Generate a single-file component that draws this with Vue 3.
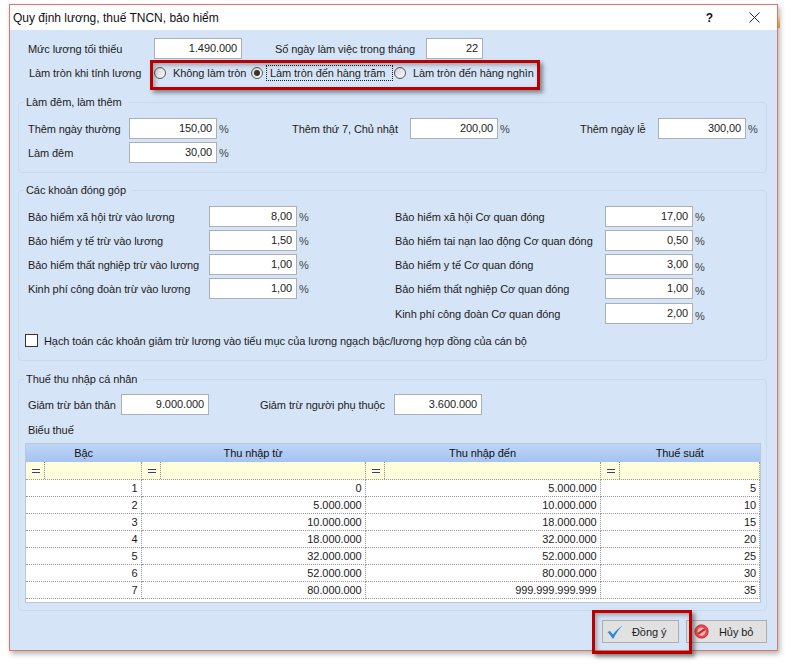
<template>
  <div class="page">
    <div class="window">
      <div class="titlebar">
        <span class="title">Quy định lương, thuế TNCN, bảo hiểm</span>
        <span class="help">?</span>
        <svg class="close" width="11" height="11" viewBox="0 0 11 11">
          <path d="M0.5 0.5 L10.5 10.5 M10.5 0.5 L0.5 10.5" stroke="#222" stroke-width="1" fill="none" />
        </svg>
      </div>

      <div class="body">
        <div class="row top-row">
          <span class="lbl w-min">Mức lương tối thiểu</span>
          <span class="input w87">1.490.000</span>
          <span class="lbl w-days">Số ngày làm việc trong tháng</span>
          <span class="input w56">22</span>
        </div>
        <div class="row round-row">
          <span class="lbl w-round">Làm tròn khi tính lương</span>
          <span class="radio"></span>
          <span class="radio-text t1">Không làm tròn</span>
          <span class="radio on"></span>
          <span class="radio-text focus">Làm tròn đến hàng trăm</span>
          <span class="radio"></span>
          <span class="radio-text t3">Làm tròn đến hàng nghìn</span>
        </div>

        <fieldset class="group g1">
          <legend>Làm đêm, làm thêm</legend>
          <div class="row">
            <span class="lbl w-g1">Thêm ngày thường</span>
            <span class="input w87">150,00</span><span class="pct">%</span>
            <span class="lbl w-sat">Thêm thứ 7, Chủ nhật</span>
            <span class="input w87">200,00</span><span class="pct">%</span>
            <span class="lbl w-hol">Thêm ngày lễ</span>
            <span class="input w87">300,00</span><span class="pct">%</span>
          </div>
          <div class="row next">
            <span class="lbl w-g1">Làm đêm</span>
            <span class="input w87">30,00</span><span class="pct">%</span>
          </div>
        </fieldset>

        <fieldset class="group g2">
          <legend>Các khoản đóng góp</legend>
          <div class="cols">
            <div class="col-left">
              <div v-for="r in leftRates" :key="r.label" class="row rate">
                <span class="lbl w-rate-l">{{ r.label }}</span>
                <span class="input w87">{{ r.value }}</span><span class="pct">%</span>
              </div>
            </div>
            <div class="col-right">
              <div v-for="r in rightRates" :key="r.label" class="row rate" :class="r.cls">
                <span class="lbl w-rate-r">{{ r.label }}</span>
                <span class="input w87">{{ r.value }}</span><span class="pct" :class="{ low: r.low }">%</span>
              </div>
            </div>
          </div>
          <div class="row check-row">
            <span class="checkbox"></span>
            <span class="lbl">Hạch toán các khoản giảm trừ lương vào tiểu mục của lương ngạch bậc/lương hợp đồng của cán bộ</span>
          </div>
        </fieldset>

        <fieldset class="group g3">
          <legend>Thuế thu nhập cá nhân</legend>
          <div class="row">
            <span class="lbl w-self">Giảm trừ bản thân</span>
            <span class="input w87">9.000.000</span>
            <span class="lbl w-dep">Giảm trừ người phụ thuộc</span>
            <span class="input w87">3.600.000</span>
          </div>
          <div class="tax-title">Biểu thuế</div>
          <div class="grid-box">
            <table class="grid">
              <colgroup>
                <col style="width: 115px" />
                <col style="width: 224px" />
                <col style="width: 235px" />
                <col />
              </colgroup>
              <thead>
                <tr>
                  <th v-for="h in headers" :key="h">{{ h }}</th>
                </tr>
              </thead>
              <tbody>
                <tr class="filter">
                  <td v-for="h in headers" :key="h">
                    <div class="filter-cell">
                      <span class="eq"></span>
                    </div>
                  </td>
                </tr>
                <tr v-for="t in taxes" :key="t[0]" class="data">
                  <td v-for="(v, i) in t" :key="i">{{ v }}</td>
                </tr>
              </tbody>
            </table>
          </div>
        </fieldset>

        <div class="actions">
          <button class="btn ok">
            <svg width="16" height="14" viewBox="0 0 16 14">
              <path d="M0.5 7 L3 6 L6 9.5 C8.5 6 11.5 3 15.5 0.5 C12 4 9 8.5 6.5 13.5 L5.5 13.5 C4 11 2.5 9 0.5 7 Z" fill="#2b87dd" />
            </svg>
            <span>Đồng ý</span>
          </button>
          <button class="btn cancel">
            <svg width="15" height="15" viewBox="0 0 16 16">
              <circle cx="8" cy="8" r="7.2" fill="#e2474f" stroke="#b92a33" stroke-width="0.8" />
              <circle cx="8" cy="8" r="4.4" fill="#f3b5b5" />
              <path d="M4.4 10.6 L11.6 5.4" stroke="#d2232d" stroke-width="2.2" />
            </svg>
            <span>Hủy bỏ</span>
          </button>
        </div>
      </div>

      <div class="mark mark-radio"></div>
      <div class="mark mark-ok"></div>
    </div>
    <div class="edge"></div>
  </div>
</template>

<script setup>
const leftRates = [
  { label: "Bảo hiểm xã hội trừ vào lương", value: "8,00" },
  { label: "Bảo hiểm y tế trừ vào lương", value: "1,50" },
  { label: "Bảo hiểm thất nghiệp trừ vào lương", value: "1,00" },
  { label: "Kinh phí công đoàn trừ vào lương", value: "1,00" }
]

const rightRates = [
  { label: "Bảo hiểm xã hội Cơ quan đóng", value: "17,00" },
  { label: "Bảo hiểm tai nạn lao động Cơ quan đóng", value: "0,50" },
  { label: "Bảo hiểm y tế Cơ quan đóng", value: "3,00", low: true },
  { label: "Bảo hiểm thất nghiệp Cơ quan đóng", value: "1,00", low: true, cls: "gap1" },
  { label: "Kinh phí công đoàn Cơ quan đóng", value: "2,00", low: true, cls: "gap4" }
]

const headers = ["Bậc", "Thu nhập từ", "Thu nhập đến", "Thuế suất"]

const taxes = [
  ["1", "0", "5.000.000", "5"],
  ["2", "5.000.000", "10.000.000", "10"],
  ["3", "10.000.000", "18.000.000", "15"],
  ["4", "18.000.000", "32.000.000", "20"],
  ["5", "32.000.000", "52.000.000", "25"],
  ["6", "52.000.000", "80.000.000", "30"],
  ["7", "80.000.000", "999.999.999.999", "35"]
]
</script>

<style>
html,
body {
  margin: 0;
  background: #fff;
}
</style>

<style scoped>
.page {
  position: relative;
  width: 796px;
  height: 671px;
  padding: 4px 0 0 9px;
  box-sizing: border-box;
  font-family: "Liberation Sans", Arial, sans-serif;
  font-size: 11px;
  letter-spacing: -0.09px;
  color: #1c1c1c;
  overflow: hidden;
}

.window {
  position: relative;
  width: 769px;
  height: 647px;
  box-sizing: border-box;
  border: 1px solid #e0736a;
  background: #d6e4f7;
  box-shadow: 2px 3px 5px rgba(90, 90, 90, 0.45);
}

.titlebar {
  display: flex;
  align-items: center;
  height: 25px;
  padding: 0 17px 0 3px;
  background: #fff;
  font-size: 12px;
  letter-spacing: 0;
  color: #111;
}

.title {
  flex: 1;
}

.help {
  margin-right: 36px;
  font-weight: bold;
  font-size: 12px;
}

.body {
  padding: 8px 10px 0 8px;
}

.row {
  display: flex;
  align-items: center;
  height: 21px;
}

.top-row {
  padding-left: 10px;
}

.round-row {
  margin-top: 3px;
  padding-left: 11px;
}

.lbl {
  white-space: nowrap;
  flex: none;
}

.input {
  flex: none;
  height: 21px;
  box-sizing: border-box;
  padding: 0 4px;
  line-height: 18px;
  text-align: right;
  background: #fff;
  border: 1px solid #a9b0ba;
}

.w87 {
  width: 88px;
}

.w56 {
  width: 57px;
}

.w-min {
  width: 126px;
}

.w-days {
  width: 151px;
  margin-left: 33px;
}

.w-round {
  width: 125px;
}

.radio {
  flex: none;
  position: relative;
  width: 10px;
  height: 10px;
  border: 1px solid #555;
  border-radius: 50%;
  background: linear-gradient(135deg, #d0d0d0, #fff);
}

.radio.on::after {
  content: "";
  position: absolute;
  left: 2px;
  top: 2px;
  width: 6px;
  height: 6px;
  border-radius: 50%;
  background: #333;
}

.radio-text {
  flex: none;
  white-space: nowrap;
}

.t1 {
  margin-left: 7px;
  width: 78px;
}

.focus {
  margin-left: 3px;
  margin-right: 1px;
  padding: 0 2px 0 3px;
  width: 120px;
  border: 1px dotted #222;
  line-height: 14px;
}

.t3 {
  margin-left: 7px;
}

.group {
  margin: 0;
  padding: 0 9px;
  border: 1px solid #c9d9ee;
  border-radius: 4px;
  min-width: 0;
}

.group legend {
  padding: 0 6px 0 2px;
  margin-left: -4px;
  line-height: 14px;
}

.g1 {
  margin-top: 12px;
  height: 67px;
  padding-top: 9px;
}

.next {
  margin-top: 3px;
}

.pct {
  flex: none;
  margin-left: 2px;
  width: 13px;
  font-size: 11px;
  color: #444;
}

.pct.low {
  position: relative;
  top: 2px;
}

.w-g1 {
  width: 101px;
}

.w-sat {
  width: 118px;
  margin-left: 60px;
}

.w-hol {
  width: 78px;
  margin-left: 67px;
}

.g2 {
  margin-top: 10px;
  height: 167px;
  padding-top: 9px;
}

.cols {
  display: flex;
}

.col-left {
  width: 367px;
}

.rate {
  margin-bottom: 3px;
}

.w-rate-l {
  width: 181px;
}

.w-rate-r {
  width: 210px;
}

.gap1 {
  margin-top: 1px;
}

.gap4 {
  margin-top: 4px;
}

.check-row {
  margin: 3px 0 0 -3px;
}

.checkbox {
  flex: none;
  width: 11px;
  height: 11px;
  margin-right: 6px;
  background: #fff;
  border: 1px solid #333;
}

.g3 {
  margin-top: 11px;
  height: 229px;
  padding-top: 8px;
}

.w-self {
  width: 93px;
}

.w-dep {
  width: 134px;
  margin-left: 51px;
}

.tax-title {
  margin-top: 8px;
  height: 20px;
  line-height: 14px;
}

.grid-box {
  width: 736px;
  height: 160px;
  margin-left: -3px;
  box-sizing: border-box;
  border: 1px solid #b9c8dc;
  background: #fff;
  overflow: hidden;
}

.grid {
  width: 100%;
  table-layout: fixed;
  border-collapse: collapse;
}

.grid th {
  height: 18px;
  padding: 0;
  font-weight: normal;
  text-align: center;
  color: #111;
  background: linear-gradient(#bdd5f6, #a5c3f2);
}

.filter td {
  height: 17px;
  padding: 0;
  background: #fefddc;
  border-right: 1px dotted #999;
  border-bottom: 1px dotted #999;
}

.filter-cell {
  height: 17px;
  display: flex;
  align-items: center;
}

/* two short lines plus the dotted divider of the filter cell */
.eq {
  display: block;
  width: 8px;
  height: 17px;
  margin-left: 6px;
  padding-right: 4px;
  box-sizing: content-box;
  border-right: 1px dotted #888;
  background-image: linear-gradient(#3a3a80, #3a3a80), linear-gradient(#3a3a80, #3a3a80);
  background-size: 8px 1px, 8px 1px;
  background-position: 0 7px, 0 10px;
  background-repeat: no-repeat;
}

.data td {
  height: 16px;
  line-height: 16px;
  padding: 0 3px 0 0;
  text-align: right;
  border-right: 1px dotted #999;
  border-bottom: 1px dotted #999;
  color: #1c1c1c;
}

.actions {
  display: flex;
  justify-content: flex-end;
  gap: 7px;
  margin-top: 9px;
}

.btn {
  display: flex;
  align-items: center;
  height: 23px;
  box-sizing: border-box;
  padding: 0;
  background: #e1e1e1;
  border: 1px solid #adadad;
  font: inherit;
  letter-spacing: inherit;
  color: #1c1c1c;
}

.ok {
  width: 77px;
  padding-left: 4px;
}

.ok span {
  margin-left: 9px;
}

.cancel {
  width: 81px;
  padding-left: 7px;
}

.cancel span {
  margin-left: 10px;
}

.mark {
  position: absolute;
  box-sizing: border-box;
  border: 3px solid #b80000;
  box-shadow: 3px 3px 4px rgba(60, 60, 60, 0.55), inset 2px 2px 4px rgba(60, 60, 60, 0.4);
  pointer-events: none;
}

.mark-radio {
  left: 140px;
  top: 55px;
  width: 390px;
  height: 30px;
}

.mark-ok {
  left: 582px;
  top: 605px;
  width: 100px;
  height: 44px;
}

.edge {
  position: absolute;
  left: 778px;
  top: 14px;
  width: 2px;
  height: 14px;
  background: linear-gradient(#e8d2a8, #cf8f35);
}
</style>
